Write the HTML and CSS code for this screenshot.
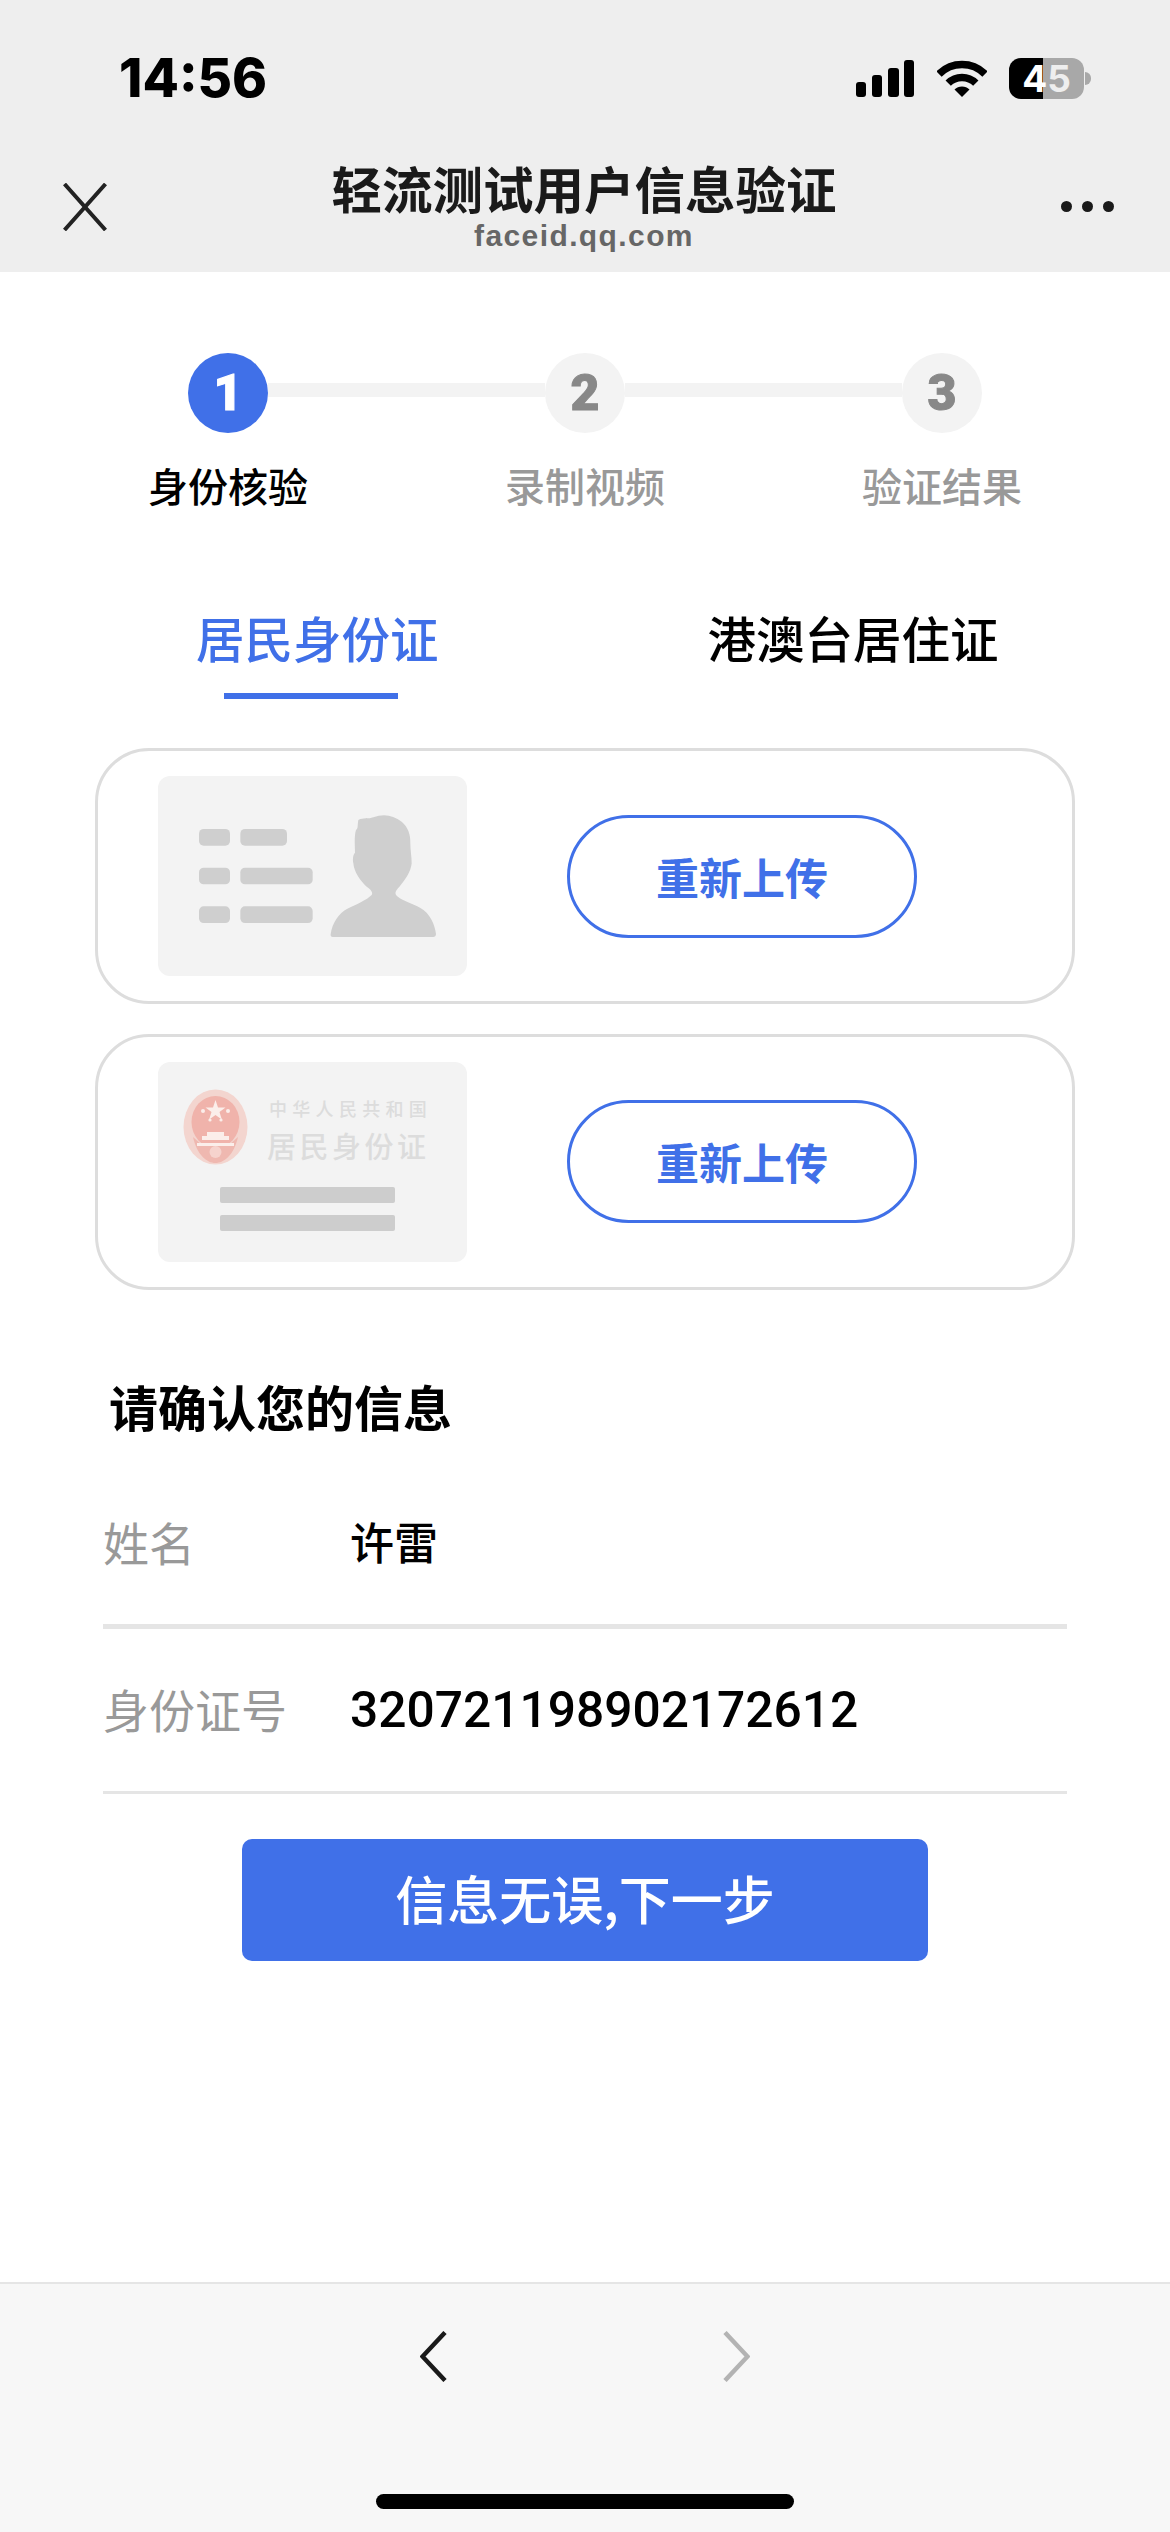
FILE: index.html
```html
<!DOCTYPE html>
<html lang="zh-CN">

<head>
    <meta charset="UTF-8">
    <meta name="viewport" content="width=device-width, initial-scale=1.0">
    <title>轻流测试用户信息验证</title>
    <link rel="stylesheet" href="styles.css">
</head>

<body>

    <div class="page">
        <header class="top">
            <div class="status">
                <span class="time">14:56</span>
                <div class="status-icons">
                    <svg class="signal" width="58" height="37" viewBox="0 0 58 37">
                        <rect x="0" y="22" width="10" height="15" rx="3"/>
                        <rect x="16" y="15" width="10" height="22" rx="3"/>
                        <rect x="32" y="8" width="11" height="29" rx="3"/>
                        <rect x="48" y="0" width="10" height="37" rx="3"/>
                    </svg>
                    <svg class="wifi" width="50" height="37" viewBox="0 0 50 37">
                        <path d="M2 14 A32.500 32.500 0 0 1 48 14" fill="none" stroke="#000" stroke-width="7.500"/>
                        <path d="M11.200 23.200 A19.500 19.500 0 0 1 38.800 23.200" fill="none" stroke="#000" stroke-width="7.500"/>
                        <path d="M17.500 29.500 A10.600 10.600 0 0 1 32.500 29.500 L25 37 Z"/>
                    </svg>
                    <div class="battery">
                        <div class="battery-body"><span class="batt-a">4</span><span class="batt-b">5</span></div>
                        <div class="battery-cap"></div>
                    </div>
                </div>
            </div>
            <div class="nav">
                <svg class="close" width="44" height="48" viewBox="0 0 44 48">
                    <path d="M1.500 1 L42.500 47 M42.500 1 L1.500 47" stroke="#222" stroke-width="4" fill="none"/>
                </svg>
                <div class="nav-title">
                    <div class="title">轻流测试用户信息验证</div>
                    <div class="domain">faceid.qq.com</div>
                </div>
                <div class="dots"><i></i><i></i><i></i></div>
            </div>
        </header>

        <main class="content">
            <div class="steps">
                <div class="step-num active">1</div>
                <div class="step-line"></div>
                <div class="step-num">2</div>
                <div class="step-line"></div>
                <div class="step-num">3</div>
            </div>
            <div class="step-labels">
                <div class="active">身份核验</div>
                <div>录制视频</div>
                <div>验证结果</div>
            </div>

            <div class="tabs">
                <div class="tab active">居民身份证<div class="tab-bar"></div></div>
                <div class="tab">港澳台居住证</div>
            </div>

            <div class="card">
                <div class="id-img">
                    <svg width="309" height="200" viewBox="174 138 927 600" fill="#cfcfcf">
                        <rect x="297" y="297" width="93" height="50" rx="14"/>
                        <rect x="421" y="297" width="140" height="50" rx="14"/>
                        <rect x="297" y="413" width="93" height="50" rx="14"/>
                        <rect x="421" y="413" width="217" height="50" rx="14"/>
                        <rect x="297" y="529" width="93" height="50" rx="14"/>
                        <rect x="421" y="529" width="217" height="50" rx="14"/>
                        <path d="M775 270 C790 262 805 268 820 262 C850 250 880 255 905 275 C925 292 932 315 931 340 C931 360 935 380 935 400 C933 425 915 450 900 468 C892 478 883 485 888 495 C900 510 935 520 960 533 C990 548 1005 585 1008 612 C1008 618 1004 621 1000 621 L698 621 C693 621 691 617 692 612 C697 580 715 550 745 535 C770 523 800 510 815 495 C820 487 812 478 800 470 C780 452 762 425 760 400 C758 390 758 375 765 368 C765 345 762 320 768 300 C775 295 772 285 775 270 Z"/>
                    </svg>
                </div>
                <div class="upload-btn">重新上传</div>
            </div>

            <div class="card">
                <div class="id-img id-back">
                    <div class="id-head">
                        <svg class="emblem" width="65" height="76" viewBox="0 0 65 76">
                            <ellipse cx="32.500" cy="38" rx="32" ry="37.500" fill="#f3d5cf"/>
                            <ellipse cx="32.500" cy="33" rx="24" ry="26" fill="#f0b3ab"/>
                            <path d="M10 48 C14 66 24 74 32.500 74 C41 74 51 66 55 48 L46 56 H19 Z" fill="#efb8b0"/>
                            <path d="M32.500 11 L35 18.500 H42.500 L36.500 23 L38.800 30.500 L32.500 26 L26.200 30.500 L28.500 23 L22.500 18.500 H30 Z" fill="#fbeeea"/>
                            <circle cx="20" cy="22" r="2" fill="#fbeeea"/>
                            <circle cx="45" cy="22" r="2" fill="#fbeeea"/>
                            <circle cx="27" cy="31" r="1.600" fill="#fbeeea"/>
                            <circle cx="38" cy="31" r="1.600" fill="#fbeeea"/>
                            <path d="M24 43 H41 V47 H46 V51 H19 V47 H24 Z" fill="#fbeeea"/>
                            <path d="M14 54 H51 V57 H14 Z" fill="#fbeeea"/>
                            <circle cx="32.500" cy="63" r="6" fill="#f6d3cd"/>
                        </svg>
                        <div class="id-text">
                            <div class="id-country">中华人民共和国</div>
                            <div class="id-name">居民身份证</div>
                        </div>
                    </div>
                    <div class="id-bar"></div>
                    <div class="id-bar"></div>
                </div>
                <div class="upload-btn">重新上传</div>
            </div>

            <h2 class="confirm">请确认您的信息</h2>
            <div class="info-row">
                <div class="info-label">姓名</div>
                <div class="info-value">许雷</div>
            </div>
            <div class="info-row last">
                <div class="info-label">身份证号</div>
                <div class="info-value number">320721198902172612</div>
            </div>
            <div class="next-btn">信息无误,下一步</div>
        </main>

        <footer class="bottom">
            <div class="arrows">
                <svg width="27" height="51" viewBox="0 0 27 51">
                    <path d="M25 1.500 L2.500 25.500 L25 49.500" fill="none" stroke="#1a1a1a" stroke-width="4.500"/>
                </svg>
                <svg width="27" height="51" viewBox="0 0 27 51">
                    <path d="M2 1.500 L24.500 25.500 L2 49.500" fill="none" stroke="#b3b3b3" stroke-width="4.500"/>
                </svg>
            </div>
            <div class="home-bar"></div>
        </footer>
    </div>

</body>

</html>
```

FILE: styles.css
```css
* {
    box-sizing: border-box;
}

body {
    margin: 0;
    padding: 0;
    background-color: #fff;
    color: #000;
    font-family: "Noto Sans CJK SC", "Noto Sans", sans-serif;
}

.page {
    width: 1170px;
    height: 2532px;
    display: flex;
    flex-direction: column;
    overflow: hidden;
}

/* top bar */
.top {
    height: 272px;
    background-color: #eeeeee;
    padding-top: 58px;
}

.status {
    display: flex;
    justify-content: space-between;
    align-items: center;
    height: 41px;
    padding: 0 79px 0 119px;
}

.time {
    font-family: Inter, sans-serif;
    font-weight: 800;
    font-size: 53px;
    line-height: 41px;
}

.status-icons {
    display: flex;
    align-items: center;
}

.wifi {
    margin-left: 23px;
}

.battery {
    display: flex;
    align-items: center;
    margin-left: 22px;
}

.battery-body {
    width: 75px;
    height: 41px;
    border-radius: 12px;
    background: linear-gradient(90deg, #000 45%, #a8a8a8 45%);
    display: flex;
    justify-content: center;
    align-items: center;
    font-family: Inter, sans-serif;
    font-weight: 700;
    font-size: 37px;
    line-height: 41px;
}

.batt-a {
    color: #fff;
}

.batt-b {
    color: #eee;
}

.battery-cap {
    width: 6px;
    height: 13px;
    margin-left: 1px;
    border-radius: 0 6px 6px 0;
    background-color: #a8a8a8;
}

.nav {
    display: flex;
    justify-content: space-between;
    align-items: center;
    height: 97px;
    margin-top: 58px;
    padding: 0 56px 0 63px;
}

.close {
    margin-top: 2px;
}

.nav-title {
    text-align: center;
}

.title {
    font-size: 50.500px;
    font-weight: 700;
    line-height: 60px;
    color: #1a1a1a;
}

.domain {
    font-family: "Liberation Sans", sans-serif;
    font-size: 30px;
    font-weight: 700;
    line-height: 36px;
    margin-top: 1px;
    letter-spacing: 1.400px;
    color: #666;
}

.dots {
    display: flex;
    gap: 10px;
    margin-top: 2px;
}

.dots i {
    display: block;
    width: 11px;
    height: 11px;
    border-radius: 50%;
    background-color: #1a1a1a;
}

/* main */
.content {
    flex: 1;
    padding-top: 81px;
}

.steps {
    display: flex;
    align-items: center;
    padding: 0 188px;
}

.step-num {
    flex: none;
    width: 80px;
    height: 80px;
    border-radius: 50%;
    background-color: #f3f3f3;
    color: #888;
    font-family: Roboto, sans-serif;
    font-weight: 900;
    font-size: 50px;
    line-height: 80px;
    text-align: center;
    -webkit-text-stroke: 1px currentColor;
}

.step-num.active {
    background-color: #4070e8;
    color: #fff;
}

.step-line {
    flex: 1;
    height: 14px;
    margin-top: -6px;
    background-color: #f3f3f3;
}

.step-labels {
    display: grid;
    grid-template-columns: repeat(3, 357px);
    margin: 27px 0 0 49.500px;
    font-size: 40px;
    font-weight: 500;
    line-height: 50px;
    text-align: center;
    color: #999;
}

.step-labels .active {
    color: #000;
}

.tabs {
    display: flex;
    margin-top: 97px;
    padding-left: 196px;
    gap: 269px;
}

.tab {
    font-size: 48.500px;
    font-weight: 500;
    line-height: 60px;
}

.tab.active {
    color: #4070e8;
}

.tab-bar {
    width: 174px;
    height: 6px;
    margin: 26px 0 0 28px;
    background-color: #4070e8;
}

.card {
    display: flex;
    align-items: center;
    width: 980px;
    height: 256px;
    margin: 49px 0 0 95px;
    padding-left: 60px;
    border: 3px solid #ddd;
    border-radius: 54px;
}

.card + .card {
    margin-top: 30px;
}

.id-img {
    flex: none;
    width: 309px;
    height: 200px;
    border-radius: 12px;
    background-color: #f3f3f3;
}

.id-img svg {
    display: block;
}

.id-back {
    padding-top: 27px;
}

.id-head {
    display: flex;
    margin: 0 0 22px 25px;
}

.id-text {
    margin-left: 19px;
    color: #dcdcdc;
    font-weight: 500;
}

.id-country {
    font-size: 18px;
    line-height: 22px;
    letter-spacing: 5.300px;
    margin: 8px 0 0 2px;
    white-space: nowrap;
}

.id-name {
    font-size: 29px;
    line-height: 36px;
    letter-spacing: 3.500px;
    margin-top: 8px;
    white-space: nowrap;
}

.upload-btn {
    flex: none;
    width: 350px;
    height: 123px;
    margin-left: 100px;
    border: 3px solid #4070e8;
    border-radius: 62px;
    color: #4070e8;
    font-size: 43px;
    font-weight: 700;
    line-height: 117px;
    text-align: center;
}

.card + .card .upload-btn {
    margin-top: -1px;
}

.id-bar {
    width: 175px;
    height: 16px;
    margin: 0 0 12px 62px;
    border-radius: 2px;
    background-color: #cdcdcd;
}

.confirm {
    margin: 86px 0 0 0;
    padding-left: 109px;
    font-size: 49px;
    font-weight: 700;
    line-height: 60px;
}

.info-row {
    display: flex;
    width: 964px;
    margin-left: 103px;
    padding: 75px 0 53px;
    border-bottom: 5px solid #e5e5e5;
    line-height: 60px;
}

.info-row.last {
    padding: 49px 0 53px;
    border-bottom-width: 3px;
}

.info-label {
    width: 247px;
    font-size: 46px;
    color: #999;
}

.info-value {
    font-size: 44px;
    font-weight: 500;
}

.info-value.number {
    font-family: Roboto, sans-serif;
    font-size: 49.700px;
    position: relative;
    top: 2px;
}

.next-btn {
    width: 686px;
    height: 122px;
    margin: 45px auto 0;
    border-radius: 10px;
    background-color: #4070e8;
    color: #fff;
    font-size: 52px;
    font-weight: 500;
    line-height: 118px;
    text-align: center;
}

/* bottom toolbar */
.bottom {
    height: 250px;
    padding-top: 47px;
    background-color: #f7f7f7;
    border-top: 2px solid #e5e5e5;
}

.arrows {
    display: flex;
    justify-content: center;
    gap: 276px;
}

.arrows svg {
    display: block;
}

.home-bar {
    width: 418px;
    height: 15px;
    margin: 112px 0 0 376px;
    border-radius: 8px;
    background-color: #000;
}
```
